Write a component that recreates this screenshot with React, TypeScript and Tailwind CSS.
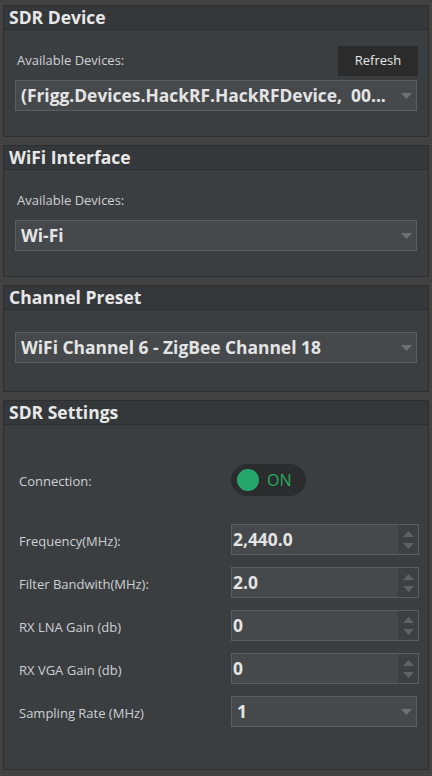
import React from "react";

const font = { fontFamily: '"Open Sans", "Noto Sans", sans-serif' };

const Panel: React.FC<{ title: string; className?: string; children: React.ReactNode }> = ({ title, className, children }) => (
  <section className="border border-[#2c2e30] bg-[#3b3e41]">
    <header className="h-[24px] border-b border-[#2c2e30] bg-[#35383b] pl-[5px] text-[17.5px] font-bold leading-[23px] text-[#e8e8e8]">
      {title}
    </header>
    <div className={className}>{children}</div>
  </section>
);

const Arrow: React.FC = () => (
  <svg width="11" height="6" viewBox="0 0 11 6" className="shrink-0">
    <path d="M0 0h11L5.5 6z" fill="#6e7174" />
  </svg>
);

const Combo: React.FC<{ value: string; className?: string }> = ({ value, className }) => (
  <div
    className={`flex h-[31px] items-center justify-between border border-[#5b5e61] bg-[#46494c] pl-[5px] pr-[4px] ${className ?? ""}`}
  >
    <span className="truncate whitespace-pre text-[17.4px] font-bold text-[#e4e4e4]">{value}</span>
    <Arrow />
  </div>
);

const Spin: React.FC<{ value: string }> = ({ value }) => (
  <div className="flex h-[31px] w-[188px] border border-[#5b5e61] bg-[#46494c]">
    <span className="flex-1 pl-[1px] text-[17.4px] font-bold leading-[28px] text-[#e4e4e4]">{value}</span>
    <div className="flex w-[20px] flex-col items-center justify-center gap-[6px] bg-[#3d4043]">
      <svg width="11" height="6" viewBox="0 0 11 6">
        <path d="M5.5 0L11 6H0z" fill="#5f6265" />
      </svg>
      <svg width="11" height="6" viewBox="0 0 11 6">
        <path d="M0 0h11L5.5 6z" fill="#5f6265" />
      </svg>
    </div>
  </div>
);

const Row: React.FC<{ label: string; children: React.ReactNode }> = ({ label, children }) => (
  <div className="flex h-[31px] items-center">
    <span className="w-[212px] pt-[5px] text-[13px] text-[#cdd0d2]">{label}</span>
    {children}
  </div>
);

export default function App() {
  return (
    <div className="flex h-[776px] w-[432px] flex-col gap-[8px] bg-[#424242] px-[3px] pt-[5px]" style={font}>
      <Panel title="SDR Device" className="h-[106px] px-[11px] pt-[16px]">
        <div className="flex h-[30px] items-center justify-between">
          <span className="pl-[2px] text-[13px] text-[#cdd0d2]">Available Devices:</span>
          <button className="-mr-[1px] h-[30px] w-[80px] bg-[#2b2b2b] text-[13px] text-[#e6e6e6]">Refresh</button>
        </div>
        <Combo value="(Frigg.Devices.HackRF.HackRFDevice,  00..." className="mt-[4px]" />
      </Panel>

      <Panel title="WiFi Interface" className="h-[106px] px-[11px] pt-[16px]">
        <div className="flex h-[30px] items-center">
          <span className="pl-[2px] text-[13px] text-[#cdd0d2]">Available Devices:</span>
        </div>
        <Combo value="Wi-Fi" className="mt-[4px]" />
      </Panel>

      <Panel title="Channel Preset" className="h-[81px] px-[11px] pt-[22px]">
        <Combo value="WiFi Channel 6 - ZigBee Channel 18" />
      </Panel>

      <Panel title="SDR Settings" className="flex h-[344px] flex-col pl-[15px] pt-[39px]">
        <Row label="Connection:">
          <div className="flex h-[32px] w-[75px] items-center rounded-full bg-[#2b2c2d] pl-[6px]">
            <span className="h-[22px] w-[22px] rounded-full bg-[#25a76b]" />
            <span className="ml-[8px] text-[16px] text-[#27ae60]">ON</span>
          </div>
        </Row>
        <div className="mt-[29px] flex flex-col gap-[12px]">
          <Row label="Frequency(MHz):">
            <Spin value="2,440.0" />
          </Row>
          <Row label="Filter Bandwith(MHz):">
            <Spin value="2.0" />
          </Row>
          <Row label="RX LNA Gain (db)">
            <Spin value="0" />
          </Row>
          <Row label="RX VGA Gain (db)">
            <Spin value="0" />
          </Row>
          <Row label="Sampling Rate (MHz)">
            <Combo value="1" className="w-[186px]" />
          </Row>
        </div>
      </Panel>
    </div>
  );
}
